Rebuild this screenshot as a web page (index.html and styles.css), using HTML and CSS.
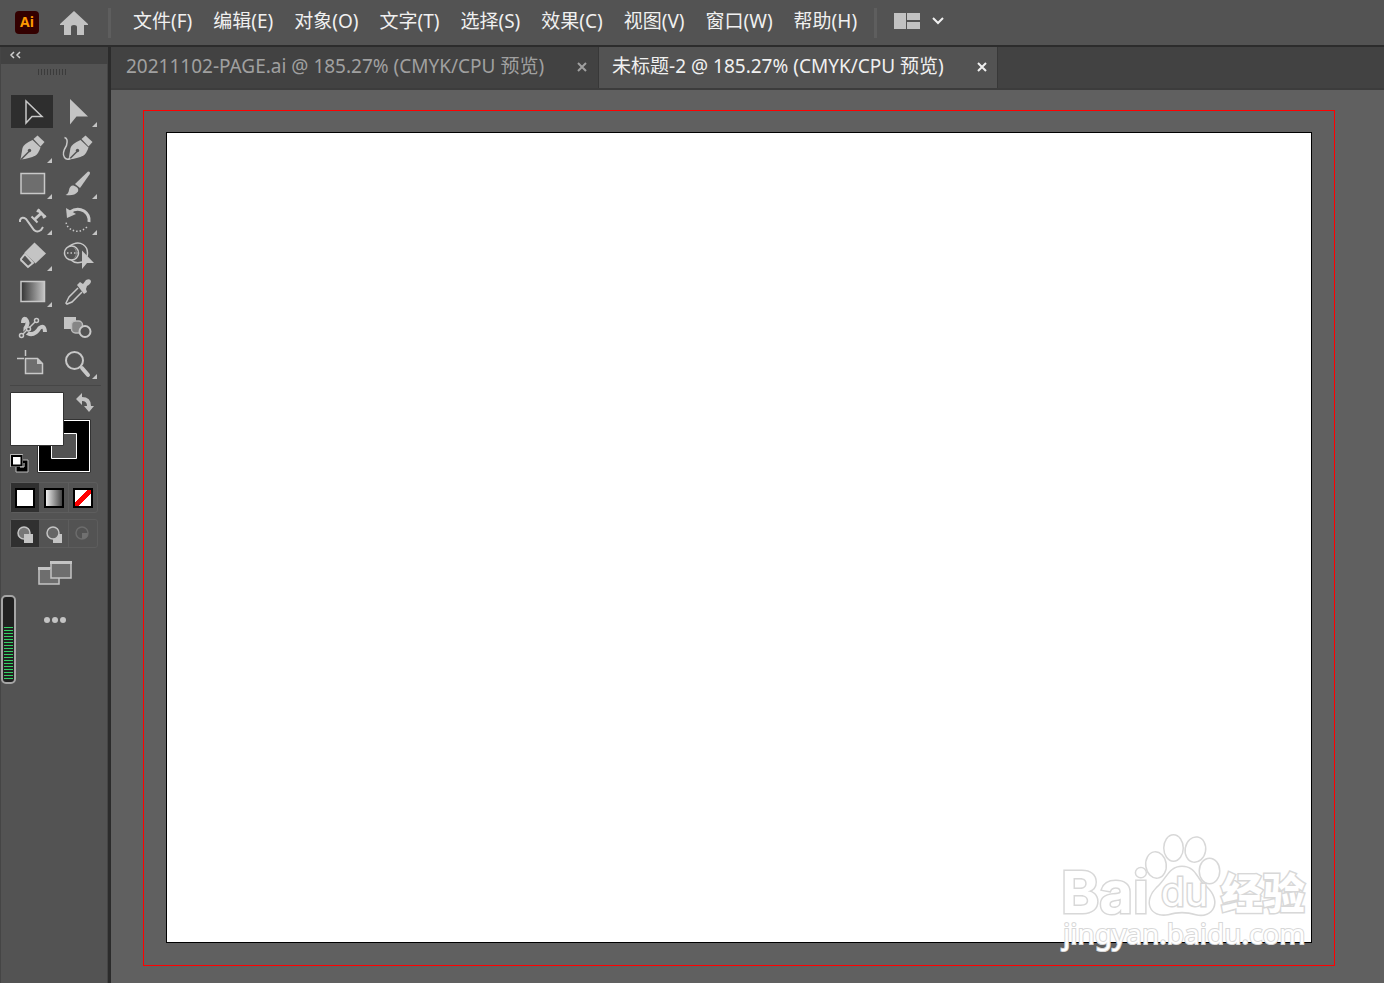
FILE: index.html
```html
<!DOCTYPE html>
<html lang="zh-CN">
<head>
<meta charset="utf-8">
<title>未标题-2</title>
<link rel="stylesheet" href="styles.css">
</head>
<body>
<header class="menubar">
  <svg class="app-logo" width="24" height="23" viewBox="0 0 24 23" role="img" aria-label="Ai"><rect width="24" height="23" rx="4" fill="#330000"/><text x="12" y="16" text-anchor="middle" class="logo-text">Ai</text></svg>
  <button class="home" aria-label="主页"><svg width="28" height="24" viewBox="0 0 28 24"><path d="M14 0 28 13v1h-4v10h-7v-8q0-2-3-2t-3 2v8H4V14H0v-1z" fill="#c2c2c2"/></svg></button>
  <nav class="menus">
    <button>文件(F)</button><button>编辑(E)</button><button>对象(O)</button><button>文字(T)</button><button>选择(S)</button><button>效果(C)</button><button>视图(V)</button><button>窗口(W)</button><button>帮助(H)</button>
  </nav>
  <button class="workspace" aria-label="工作区"><svg width="50" height="18" viewBox="0 0 50 18"><path d="M0 1h12v16H0zM13 1h13v7H13zM13 10h13v7H13z" fill="#c2c2c2"/><path d="m39 6 5 5 5-5" fill="none" stroke="#f0f0f0" stroke-width="2"/></svg></button>
</header>
<div class="workbench">
  <aside class="toolbar">
    <button class="collapse" aria-label="折叠"><svg width="12" height="8" viewBox="0 0 12 8"><path d="M5 1 2 4l3 3M11 1 8 4l3 3" fill="none" stroke="#d0d0d0" stroke-width="1.5"/></svg></button>
    <div class="grip"></div>
    <div class="tools">
      <button class="tool active" aria-label="选择"><svg viewBox="0 0 45 36"><path d="M16 7v22l6-6.500h10z" class="line slim"/></svg></button>
      <button class="tool" aria-label="直接选择"><svg viewBox="0 0 45 36"><path d="M15 5v25.500l6.500-8H33z"/><path d="M42 28v5h-5z"/></svg></button>
      <button class="tool" aria-label="钢笔"><svg viewBox="0 0 45 36"><path d="M10.500 29.500 12.500 18q1-4 10-8l8 7.500q-2 6-5 8-6 3-15 4z"/><path d="m23.500 9 4-3.500 7 6.500-4 4.500z"/><path d="m11 29.500 8-8" class="cut slim"/><circle cx="19.500" cy="20.500" r="1.700" fill="#535353"/><path d="M42 28v5h-5z"/></svg></button>
      <button class="tool" aria-label="曲率"><svg viewBox="0 0 45 36"><path d="M13.500 29.500 15.500 18q1-4 10-8l8 7.500q-2 6-5 8-6 3-15 4z"/><path d="m26.500 9 4-3.500 7 6.500-4 4.500z"/><path d="m14 29.500 8-8" class="cut slim"/><circle cx="22.500" cy="20.500" r="1.700" fill="#535353"/><path d="M9.500 7.500q4 1 2 8-5 8-2 12 2 3 6 1" class="line slim"/></svg></button>
      <button class="tool" aria-label="矩形"><svg viewBox="0 0 45 36"><path d="M11 7.500h23.500v20H11z" class="line slim filled"/><path d="M42 28v5h-5z"/></svg></button>
      <button class="tool" aria-label="画笔"><svg viewBox="0 0 45 36"><path d="M33 5.500q3 0 1.500 3L25 22l-5-4z"/><path d="M18.500 19.500q6 2 4.500 6-4 5-12.500 3.500 3-1 3.500-5 1-5 4.500-4.500z"/><path d="M42 28v5h-5z"/></svg></button>
      <button class="tool" aria-label="路径文字"><svg viewBox="0 0 45 36"><path d="M10 20v-2q2-4 6-1l8 11q3 3 7 0l2-3" class="line"/><path d="m28 8 7 7" class="line bold"/><path d="M32 10.500l-7.500 7" class="line bold"/><path d="m21.500 14.500 6 6M27 10l2-3M33 16l3-2" class="line"/><path d="M42 28v5h-5z"/></svg></button>
      <button class="tool" aria-label="旋转"><svg viewBox="0 0 45 36"><path d="M15 10q7-5 14-1 6 4 5 11" class="line bold"/><path d="m11 6 1 10 9-4z"/><path d="M32 25Q23 33 14 26q-3-3-3-7" class="line dots"/><path d="M42 28v5h-5z"/></svg></button>
      <button class="tool" aria-label="橡皮擦"><svg viewBox="0 0 45 36"><path d="m24.500 4.500 11.500 11-10.500 10-11-11z"/><path d="m15 16-4 5q0 2 1 2l6 6 5-4z" class="line"/><path d="M42 28v5h-5z"/></svg></button>
      <button class="tool" aria-label="形状生成器"><svg viewBox="0 0 45 36"><circle cx="16.500" cy="15" r="7" class="line slim"/><path d="M14 8.500q8-6 14-2 6 4 4 12M16 22q4 4 11 2" class="line slim"/><path d="M19 9q5 6 0 12" class="line faint"/><path d="M12 15h14" class="line dots"/><path d="M27 12.500V31l5-6h7z"/></svg></button>
      <button class="tool" aria-label="渐变"><svg viewBox="0 0 45 36"><defs><linearGradient id="fade"><stop stop-color="#333"/><stop offset="1" stop-color="#c4c4c4"/></linearGradient></defs><path d="M11 7.500h23.500v20H11z" fill="url(#fade)" stroke="#c8c8c8" stroke-width="1.500"/><path d="M42 28v5h-5z"/></svg></button>
      <button class="tool" aria-label="吸管"><svg viewBox="0 0 45 36"><path d="m22 11 3-3 3 2 3-4q4-2 5 1 0 3-4 5l-1 3 1 3-3 2z"/><path d="m23 14-9 9-3 6 1 1 5-2 10-10" class="line slim"/></svg></button>
      <button class="tool" aria-label="操控变形"><svg viewBox="0 0 45 36"><path d="M13 13q0-5 2.500-4 4 4 0 9-1 5 4 6 6 1 10-6 5-4 5.500 4" class="line heavy"/><path d="m12 26 14-15" class="cut heavy"/><path d="m12 25 14-14" class="line slim"/><circle cx="26.500" cy="10.500" r="2" class="node"/><circle cx="18.500" cy="19" r="2" class="node"/><circle cx="11.500" cy="25.500" r="2" class="node"/></svg></button>
      <button class="tool" aria-label="混合"><svg viewBox="0 0 45 36"><path d="M9 7h12v12H9z"/><rect x="16.500" y="11" width="11" height="12" rx="4" fill="#858585" stroke="#bbb" stroke-width="1.500"/><circle cx="30" cy="21.500" r="5.500" class="node thick"/></svg></button>
      <button class="tool" aria-label="画板"><svg viewBox="0 0 45 36"><path d="M7 12.500h7M15.500 4v6" class="line slim"/><path d="M15.500 12.500h12l5 5v10h-17z" class="line slim filled"/><path d="M27 12v6h6z"/></svg></button>
      <button class="tool" aria-label="缩放"><svg viewBox="0 0 45 36"><circle cx="19.500" cy="14.500" r="8.500" class="line"/><path d="m27 22 6 7" class="line handle"/><path d="M42 28v5h-5z"/></svg></button>
    </div>
    <div class="paint">
      <svg width="90" height="84" viewBox="0 0 90 84" role="img" aria-label="填色和描边"><path d="M27.500 29.500h53v53h-53z" fill="#fff" stroke="#333"/><path d="M29 31h50v50H29z"/><path d="M41.500 43.500h25v25h-25z" fill="#535353" stroke="#fff"/><path d="M.5 2.500h53v53H.5z" fill="#fff" stroke="#333"/><path d="m66 9 6-6v4q9 0 9 9h3l-5 6-5-6h3q0-5-5-5v4z" fill="#c2c2c2"/><path d="M6 70h12v12H6z" fill="#000" stroke="#bbb"/><path d="M.5 64.500h12v12H.5z" fill="#fff" stroke="#bbb"/><path d="M2 66h9.500v9.500H2z" fill="#fff" stroke="#000" stroke-width="2"/><path d="M14 73v4h-4" fill="none" stroke="#ddd"/></svg>
    </div>
    <div class="segments">
      <button class="on" aria-label="颜色"><span class="chip"></span></button><button aria-label="渐变填充"><span class="chip shade"></span></button><button aria-label="无"><span class="chip none"></span></button>
    </div>
    <div class="segments modes">
      <button class="on" aria-label="正常绘图"><svg viewBox="0 0 20 20"><circle cx="9" cy="9" r="6" fill="#777" stroke="#c4c4c4" stroke-width="1.500"/><path d="M9 10h9v9H9z" fill="#c4c4c4"/></svg></button><button aria-label="背面绘图"><svg viewBox="0 0 20 20"><path d="M9 10h9v9H9z" fill="#c4c4c4"/><circle cx="9" cy="9" r="6" fill="#666" stroke="#c4c4c4" stroke-width="1.500"/></svg></button><button disabled aria-label="内部绘图"><svg viewBox="0 0 20 20"><circle cx="9" cy="9" r="6" fill="none" stroke="#6c6c6c" stroke-width="1.500"/><path d="M9 9h6q0 6-6 6z" fill="#707070"/></svg></button>
    </div>
    <button class="screen-mode" aria-label="屏幕模式"><svg width="34" height="26" viewBox="0 0 34 26"><g fill="#6e6e6e" stroke="#c4c4c4" stroke-width="1.500"><path d="M1 8h20v16H1z"/><path d="M13 2h20v16H13z"/></g><path d="M0 7h12v3H0zM12 1h22v3H12z" fill="#c4c4c4"/></svg></button>
    <button class="more" aria-label="更多"><svg width="24" height="8" viewBox="0 0 24 8" fill="#c4c4c4"><circle cx="4" cy="4" r="3"/><circle cx="12" cy="4" r="3"/><circle cx="20" cy="4" r="3"/></svg></button>
    <div class="meter"><span></span></div>
  </aside>
  <main class="document">
    <div class="tabs">
      <div class="tab"><a href="#page">20211102-PAGE.ai @ 185.27% (CMYK/CPU 预览)</a><button aria-label="关闭"><svg width="10" height="10" viewBox="0 0 10 10"><path d="m1 1 8 8m0-8-8 8"/></svg></button></div>
      <div class="tab current"><a href="#untitled">未标题-2 @ 185.27% (CMYK/CPU 预览)</a><button aria-label="关闭"><svg width="10" height="10" viewBox="0 0 10 10"><path d="m1 1 8 8m0-8-8 8"/></svg></button></div>
    </div>
    <div class="canvas">
      <div class="bleed">
        <div class="artboard">
          <svg class="watermark" width="256" height="126" viewBox="0 0 256 126" role="img" aria-label="Baidu 经验">
            <g class="mark">
              <text x="6" y="84" class="brand">Bai</text>
              <ellipse cx="101" cy="36" rx="9.500" ry="12.500" transform="rotate(-8 101 36)"/><ellipse cx="118.500" cy="19" rx="9" ry="12.500"/><ellipse cx="140.500" cy="20.500" rx="9.500" ry="12" transform="rotate(10 140 20)"/><ellipse cx="154.500" cy="42" rx="9.500" ry="12"/>
              <path d="M127 38c14 0 14 13 24 20 16 15 6 31-10 27-10-3-18-3-28 0-18 3-24-13-11-26 10-8 12-21 25-21z"/>
              <text x="106" y="77" class="du">du</text>
              <text x="166" y="80" class="cjk">经验</text>
              <text x="8" y="115" class="site">jingyan.baidu.com</text>
            </g>
          </svg>
        </div>
      </div>
    </div>
  </main>
</div>
</body>
</html>
```
FILE: styles.css
```css
* { box-sizing: border-box; }
body {
  margin: 0;
  height: 100vh;
  display: flex;
  flex-direction: column;
  overflow: hidden;
  background: #535353;
  color: #f0f0f0;
  font: 19px/26px "Noto Sans", "Noto Sans CJK SC", sans-serif;
}
button {
  margin: 0;
  padding: 0;
  border: 0;
  background: none;
  color: inherit;
  font: inherit;
}
svg { display: block; }
a { color: inherit; text-decoration: none; white-space: nowrap; }

.menubar {
  display: flex;
  align-items: center;
  height: 45px;
  padding-left: 15px;
  flex: none;
}
.logo-text { font: bold 14px "Open Sans", sans-serif; fill: #ff9a00; }
.home { margin-left: 21px; }
.menus {
  display: flex;
  gap: 21px;
  margin-left: 20px;
  padding: 0 17px 4px 22px;
  border-left: 3px solid #5e5e5e;
  border-right: 3px solid #5e5e5e;
  height: 30px;
  white-space: nowrap;
}
.workspace { margin-left: 17px; padding-bottom: 4px; }

.workbench { flex: 1; display: flex; min-height: 0; border-top: 2px solid #2c2c2c; }
.toolbar {
  position: relative;
  flex: none;
  width: 111px;
  padding-left: 1px;
  border-right: 3px solid #2b2b2b;
  box-shadow: inset 1px 0 #454545, inset -1px 0 #454545;
}
.collapse {
  display: flex;
  align-items: center;
  width: 100%;
  height: 17px;
  padding: 0 0 2px 8px;
  background: #424242;
}
.grip {
  width: 29px;
  height: 6px;
  margin: 5px 0 19px 37px;
  background: repeating-linear-gradient(90deg, #3b3b3b 0 1px, transparent 1px 3px);
}
.tools {
  display: grid;
  grid-template-columns: 45px 45px;
  grid-auto-rows: 36px;
  margin-left: 9px;
  padding-bottom: 3px;
  width: 91px;
  border-bottom: 1px solid #464646;
}
.tool { fill: #c4c4c4; width: 45px; height: 36px; }
.tool.active {
  background: linear-gradient(#2e2e2e, #2e2e2e) 1px 1px / 42px 33px no-repeat;
}
.line { fill: none; stroke: #c8c8c8; stroke-width: 2; }
.line.filled { fill: #6e6e6e; }
.line.slim { stroke-width: 1.5; }
.line.faint { stroke: #8c8c8c; stroke-width: 1; }
.line.bold { stroke-width: 3; }
.line.heavy { stroke-width: 4; }
.line.handle { stroke-width: 4; stroke-linecap: round; }
.line.dots { stroke-width: 1.5; stroke-dasharray: 1.5 2; }
.cut { fill: none; stroke: #535353; stroke-width: 2; }
.cut.slim { stroke-width: 1.5; }
.cut.heavy { stroke-width: 4; }
.node { fill: #535353; stroke: #c8c8c8; stroke-width: 1.5; }
.node.thick { stroke-width: 2; }

.paint { margin: 4px 0 0 9px; }
.segments {
  display: grid;
  grid-template-columns: 28px 30px 1fr;
  width: 88px;
  height: 31px;
  margin: 8px 0 0 9px;
  border: 1px solid #5d5d5d;
  border-radius: 3px;
}
.segments button { display: grid; place-items: center; border-right: 1px solid #5d5d5d; }
.segments button:last-child { border-right: 0; }
.segments .on { background: #303030; border-right: 0; }
.segments svg { width: 20px; height: 20px; }
.modes { height: 29px; margin-top: 6px; }
.chip { width: 20px; height: 20px; border: 2px solid #000; background: #fff; }
.chip.shade { background: linear-gradient(90deg, #eee, #444); }
.chip.none { background: linear-gradient(135deg, #fff 40%, #f00 40% 60%, #fff 60%); }
.screen-mode { display: block; margin: 12px 0 0 37px; }
.more { display: block; margin: 30px 0 0 42px; }
.meter {
  position: absolute;
  left: 1px;
  top: 548px;
  width: 15px;
  height: 89px;
  padding: 30px 1px 3px;
  border: 2px solid #a5a5a5;
  border-radius: 5px;
  background: #202020;
}
.meter span {
  display: block;
  height: 100%;
  background: repeating-linear-gradient(#32d264 0 1px, transparent 1px 3px);
}

.document { flex: 1; min-width: 0; display: flex; flex-direction: column; background: #606060; }
.tabs { display: flex; height: 43px; flex: none; background: #424242; border-bottom: 2px solid #3c3c3c; }
.tab {
  display: flex;
  align-items: center;
  justify-content: space-between;
  gap: 33px;
  padding: 0 11px 4px 15px;
  border-right: 1px solid #383838;
  color: #a0a0a0;
}
.tab button { padding-top: 2px; }
.tab path { stroke: currentColor; stroke-width: 2; }
.tab.current { padding: 0 10px 4px 13px; background: #535353; color: #f0f0f0; }
.canvas { flex: 1; display: flex; min-height: 0; padding: 20px 49px 17px 32px; }
.bleed { flex: 1; display: flex; padding: 21px 22px 22px; border: 1px solid #f00; }
.artboard { position: relative; flex: 1; border: 1px solid #000; background: #fff; }
.watermark { position: absolute; right: 0; bottom: -13px; overflow: visible; }
.mark { fill: #fff; stroke: #d8d8d8; stroke-width: 3; paint-order: stroke; }
.brand { font: bold 58px Inter, sans-serif; }
.du { font: 39px Inter, sans-serif; }
.cjk { font: 900 42px "Noto Sans CJK SC", sans-serif; }
.site { font: 28px "Noto Sans", sans-serif; stroke-width: 2; }
```
